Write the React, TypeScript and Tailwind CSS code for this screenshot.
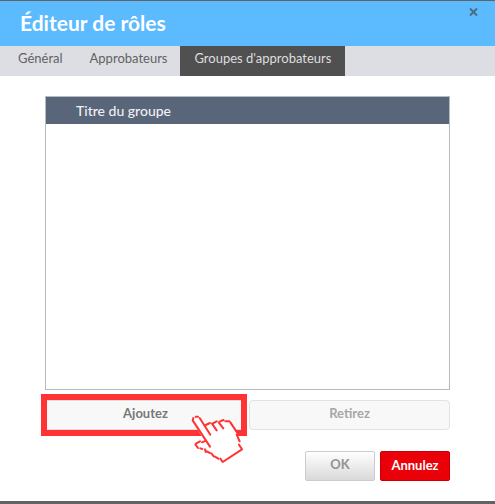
function PointingHand() {
  return (
    <svg
      className="pointer-events-none absolute right-px top-[13px] h-[52px] w-[55px]"
      viewBox="30 99 165 156"
      fill="none"
      aria-hidden="true"
    >
      <path
        d="M38 122 L40 114 L49 108 L59 113 L76 137 L91 127 L101 132 L108 123 L119 129 L131 119 L149 125 L170 160 L170 172 L178 184 L177 194 L187 209 L127 247 L115 234 L104 231 L95 220 L80 216 L72 207 L55 204 L46 192 L59 183 L75 186 Z"
        fill="#fff"
      />
      <g stroke="#ff3333" strokeWidth="6" strokeLinejoin="round" strokeLinecap="round">
        <path d="M40 124 L90 200" />
        <path d="M38 122 L40 114" />
        <path d="M47 110 L54 110" />
        <path d="M59 114 L91 164" />
        <path d="M77 135 L90 129" />
        <path d="M96 131 L110 151" />
        <path d="M99 130 L110 124" />
        <path d="M116 127 L130 145" />
        <path d="M120 124 L131 120" />
        <path d="M136 124 L148 124" />
        <path d="M151 127 L171 157" />
        <path d="M170 164 L179 184" />
        <path d="M177 194 L186 208 L128 246 L121 236" />
        <path d="M115 236 L105 230" />
        <path d="M101 229 L95 221" />
        <path d="M90 219 L80 214" />
        <path d="M77 216 L75 208" />
        <path d="M67 207 L61 205" />
        <path d="M54 204 L46 193" />
        <path d="M49 190 L60 184" />
        <path d="M66 187 L78 182" />
      </g>
    </svg>
  );
}

const tabs = ["Général", "Approbateurs", "Groupes d'approbateurs"];

export default function App() {
  return (
    <div className="bg-[#636363] pb-1 pt-px font-['Lato','Open_Sans',sans-serif] text-[13px]">
      <main className="bg-white">
        <header className="flex h-[45px] items-start justify-between bg-[#5cbaff] pl-5 pr-[17px] text-white">
          <h1 className="pt-2 text-[21px] font-bold leading-7">Éditeur de rôles</h1>
          <button type="button" aria-label="Fermer" className="mt-[7px] p-0 text-[#4f6b82]">
            <svg width="9" height="8" viewBox="0 0 9 8" stroke="currentColor" strokeWidth="2" aria-hidden="true">
              <path d="M1 0.5 L8 7.5 M8 0.5 L1 7.5" />
            </svg>
          </button>
        </header>
        <nav role="tablist" className="flex h-[30px] bg-[#dddee3]">
          {tabs.map((tab, i) => (
            <button
              key={tab}
              type="button"
              role="tab"
              aria-selected={i === 2}
              className={
                i === 2
                  ? "bg-[#505050] px-[14px] pb-1 text-[#dedede]"
                  : i === 0
                    ? "pb-1 pl-[18px] pr-[14px] text-[#626262]"
                    : "px-[13px] pb-1 text-[#626262]"
              }
            >
              {tab}
            </button>
          ))}
        </nav>
        <div className="px-[45px] pb-5 pt-[20px]">
          <div className="h-[294px] border border-[#b5bac0]">
            <table className="w-full">
              <thead>
                <tr className="h-[27px] bg-[#596579] text-left text-[14px] leading-5 text-[#eef0f3]">
                  <th className="p-0 pl-[30px] font-medium">Titre du groupe</th>
                </tr>
              </thead>
            </table>
          </div>
          <div className="mt-[10px] grid grid-cols-2 gap-[3px] font-bold">
            <div className="relative">
              <button type="button" className="h-[30px] w-full rounded-sm border border-[#dcdcdc] bg-[#f8f8f8] pb-0.5 text-[#777]">
                Ajoutez
              </button>
              <div className="pointer-events-none absolute -left-1 -right-px -top-1.5 h-[42px] border-6 border-[#ff3333]" />
              <PointingHand />
            </div>
            <button type="button" disabled className="h-[30px] rounded-sm border border-[#e2e2e2] bg-[#f8f8f8] pb-0.5 text-[#a6a6a6]">
              Retirez
            </button>
          </div>
          <div className="mt-[21px] flex justify-end gap-[5px]">
            <button type="button" className="h-[30px] w-[70px] rounded-xs border border-[#cccccc] bg-linear-to-b from-white to-[#d9d9d9] pb-0.5 font-bold text-[#929292]">
              OK
            </button>
            <button type="button" className="h-[30px] w-[70px] rounded-xs border border-[#c80006] bg-[#e90008] font-bold text-white">
              Annulez
            </button>
          </div>
        </div>
      </main>
    </div>
  );
}
